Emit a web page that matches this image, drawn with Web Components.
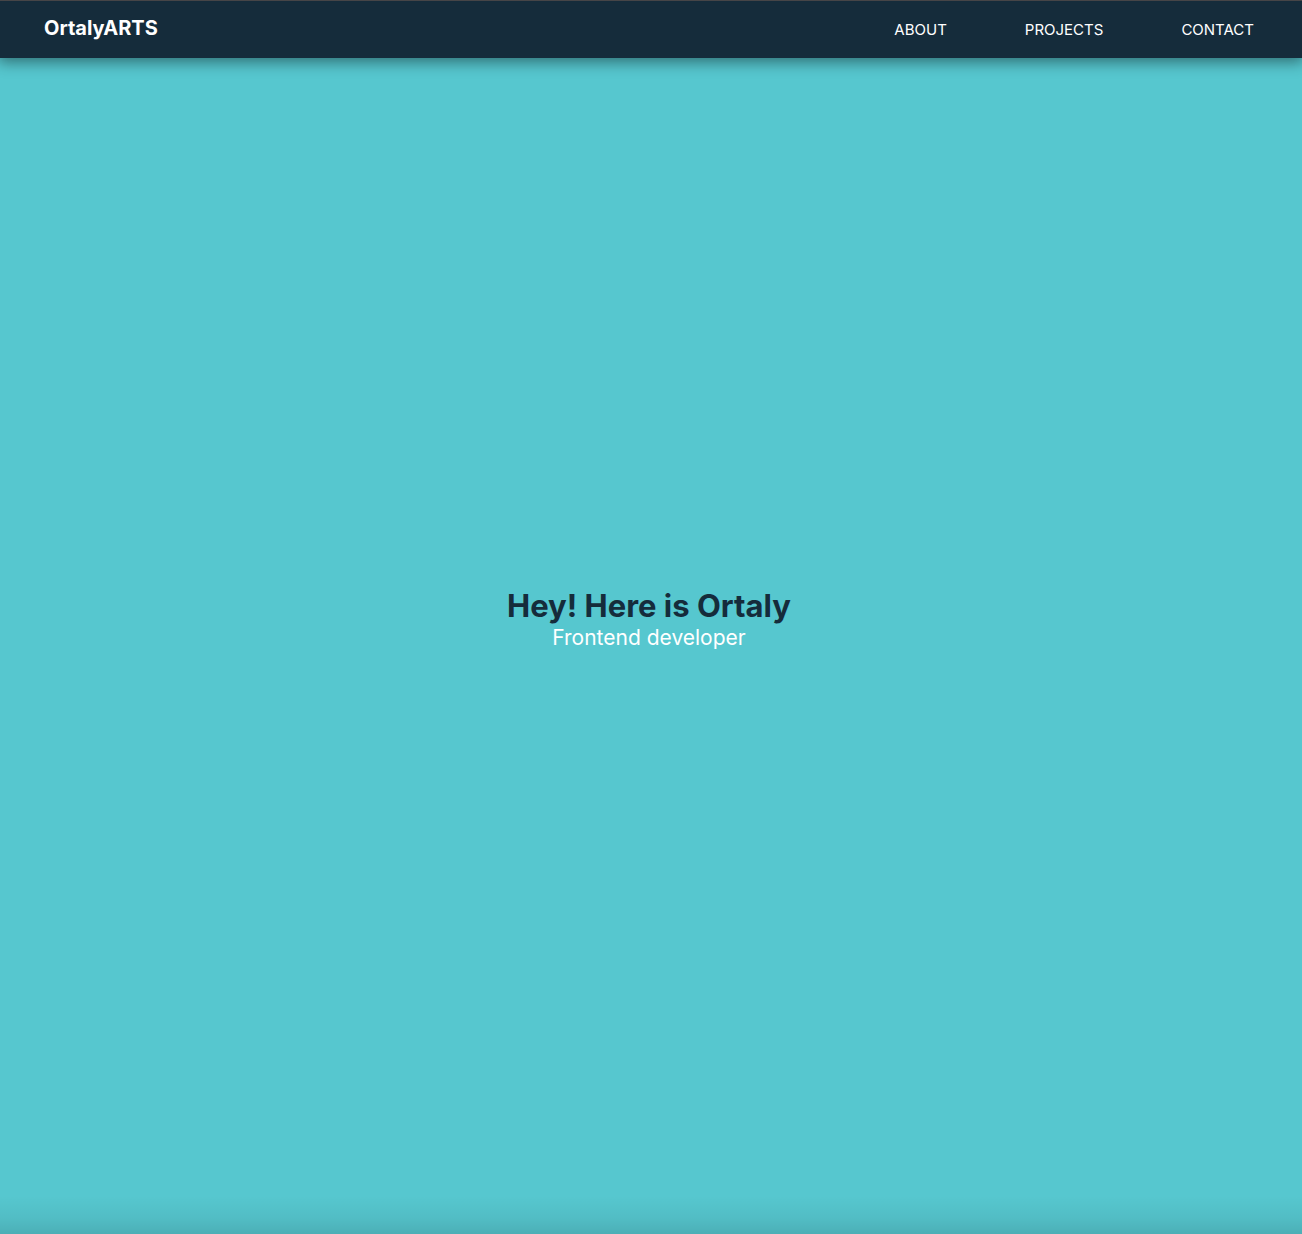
<!DOCTYPE html>
<html lang="en">
<head>
<meta charset="utf-8">
<meta name="viewport" content="width=device-width, initial-scale=1">
<title>OrtalyARTS</title>
<style>
  body { margin: 0; font-family: Inter, "Liberation Sans", sans-serif; --navy: #152c3b; --teal: #56c7cf; }
</style>
</head>
<body>
<portfolio-page>
  <site-header slot="header">
    <a slot="brand" href="#home">OrtalyARTS</a>
    <nav-link href="#about">ABOUT</nav-link>
    <nav-link href="#projects">PROJECTS</nav-link>
    <nav-link href="#contact">CONTACT</nav-link>
  </site-header>
  <hero-banner>
    <span slot="title">Hey! Here is Ortaly</span>
    <span slot="subtitle">Frontend developer</span>
  </hero-banner>
</portfolio-page>
<script>
  class BaseElement extends HTMLElement {
    constructor() {
      super();
      this.attachShadow({ mode: 'open' }).innerHTML = this.constructor.markup;
    }
  }

  customElements.define('portfolio-page', class extends BaseElement {
    static markup = `
      <style>
        :host { display: flex; flex-direction: column; min-height: 100vh; background: var(--teal); }
        main { flex: 1; display: flex; }
      </style>
      <slot name="header"></slot>
      <main><slot></slot></main>`;
  });

  customElements.define('site-header', class extends BaseElement {
    static markup = `
      <style>
        :host { display: block; position: relative; background: var(--navy); border-top: 1px solid #464547;
                box-shadow: 0 2px 14px 2px rgba(0, 0, 0, .45); }
        header { display: flex; align-items: center; justify-content: space-between; height: 57px; padding: 0 48px 0 44px; }
        ::slotted([slot="brand"]) { color: #fff; font-size: 20px; font-weight: 700; line-height: 24px; text-decoration: none; padding-bottom: 4px; }
        nav { display: flex; gap: 78px; }
      </style>
      <header>
        <slot name="brand"></slot>
        <nav aria-label="Main"><slot></slot></nav>
      </header>`;
  });

  customElements.define('nav-link', class extends BaseElement {
    static markup = `
      <style>
        :host { display: block; }
        a { color: #fff; font-size: 15px; line-height: 20px; text-decoration: none; }
        a:hover { text-decoration: underline; }
      </style>
      <a><slot></slot></a>`;
    connectedCallback() {
      this.shadowRoot.querySelector('a').href = this.getAttribute('href');
    }
  });

  customElements.define('hero-banner', class extends BaseElement {
    static markup = `
      <style>
        :host { flex: 1; display: flex; flex-direction: column; background: linear-gradient(to top, rgba(0, 0, 0, .12), rgba(0, 0, 0, .05) 16px, transparent 38px); }
        section { flex: 1; display: flex; flex-direction: column; align-items: center; justify-content: center; padding: 0 20px 52px 16px; text-align: center; }
        h1, p { margin: 0; }
        h1 { color: var(--navy); font-size: 31px; line-height: 36px; font-weight: 700; }
        p { color: #fff; font-size: 21px; line-height: 28px; }
      </style>
      <section>
        <h1><slot name="title"></slot></h1>
        <p><slot name="subtitle"></slot></p>
      </section>`;
  });
</script>
</body>
</html>
